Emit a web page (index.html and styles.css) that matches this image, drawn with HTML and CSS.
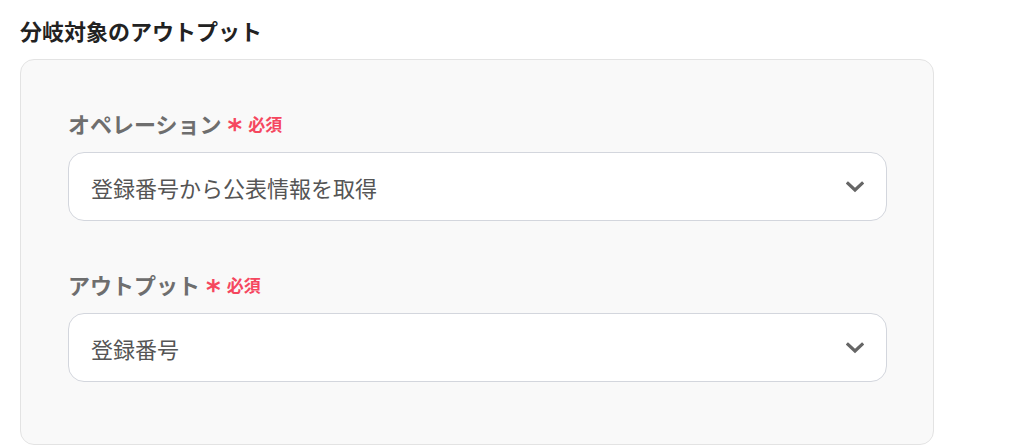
FILE: index.html
```html
<!DOCTYPE html>
<html lang="ja">
<head>
<meta charset="utf-8">
<link rel="stylesheet" href="styles.css">
</head>
<body>
<div class="page">
  <h2 class="title">分岐対象のアウトプット</h2>
  <div class="card">
    <div class="field">
      <div class="label">オペレーション<span class="ast">*</span><span class="req">必須</span></div>
      <div class="select">
        <span class="value">登録番号から公表情報を取得</span>
        <svg class="chev" width="18" height="12" viewBox="0 0 18 12"><path d="M2 2.5 L9 9 L16 2.5" fill="none" stroke="#666" stroke-width="3.2" stroke-linecap="square"/></svg>
      </div>
    </div>
    <div class="field">
      <div class="label">アウトプット<span class="ast">*</span><span class="req">必須</span></div>
      <div class="select">
        <span class="value">登録番号</span>
        <svg class="chev" width="18" height="12" viewBox="0 0 18 12"><path d="M2 2.5 L9 9 L16 2.5" fill="none" stroke="#666" stroke-width="3.2" stroke-linecap="square"/></svg>
      </div>
    </div>
  </div>
</div>
</body>
</html>
```
FILE: styles.css
```css
html, body {
  margin: 0;
  padding: 0;
  background: #fff;
}
body {
  font-family: "Noto Sans CJK JP", "Noto Sans", sans-serif;
}
.page {
  padding: 14px 87px 0 20px;
}
.title {
  margin: 0 0 13px;
  font-size: 22px;
  line-height: 32px;
  font-weight: 700;
  color: #222;
}
.card {
  width: 819px;
  border: 1px solid #e3e3e3;
  border-radius: 14px;
  background: #f9f9f9;
  padding: 47px 46px 62px 47px;
  display: flex;
  flex-direction: column;
  gap: 47px;
}
.label {
  display: flex;
  align-items: center;
  height: 32px;
  font-size: 22px;
  font-weight: 700;
  color: #6e6e6e;
  margin-bottom: 13px;
}
.ast {
  color: #f5475f;
  font-size: 28px;
  font-weight: 700;
  margin-left: 6px;
  margin-right: 6px;
  position: relative;
  top: 6px;
  font-family: "DejaVu Sans", sans-serif;
}
.req {
  color: #f5475f;
  font-size: 17px;
  font-weight: 700;
}
.select {
  box-sizing: border-box;
  height: 69px;
  border: 1px solid #d3d6dd;
  border-radius: 16px;
  background: #fff;
  display: flex;
  align-items: center;
  justify-content: space-between;
  padding: 0 22px 0 22px;
}
.value {
  font-size: 22px;
  color: #555;
}
.chev {
  display: block;
}
```
